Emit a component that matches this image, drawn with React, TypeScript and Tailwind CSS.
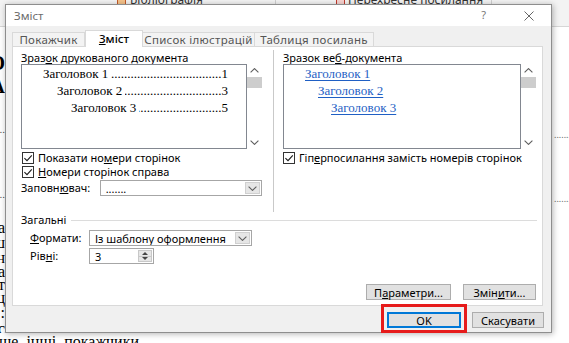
import React from "react";

function ChevronDown({ className = "" }: { className?: string }) {
  return (
    <svg viewBox="0 0 9 5" className={className} fill="none">
      <path d="M0.6 0.6 L4.5 4.4 L8.4 0.6" stroke="#5f5f5f" strokeWidth="1.1" />
    </svg>
  );
}

function ChevronUp({ className = "" }: { className?: string }) {
  return (
    <svg viewBox="0 0 9 5" className={className} fill="none">
      <path d="M0.6 4.4 L4.5 0.6 L8.4 4.4" stroke="#5f5f5f" strokeWidth="1.1" />
    </svg>
  );
}

function Check() {
  return (
    <span className="flex h-[12px] w-[12px] shrink-0 items-center justify-center border border-[#333333] bg-white">
      <svg viewBox="0 0 10 10" className="h-[10px] w-[10px]" fill="none">
        <path d="M1.4 5.1 L4 7.6 L8.8 2.4" stroke="#1a1a1a" strokeWidth="1.1" />
      </svg>
    </span>
  );
}

function Select({ width, value }: { width: string; value: string }) {
  return (
    <div className={`flex h-[16px] items-stretch border border-[#a6a6a6] bg-white ${width}`}>
      <span className="flex flex-1 items-center overflow-hidden pl-[5px] leading-none whitespace-nowrap">{value}</span>
      <span className="m-px flex w-[15px] items-center justify-center border border-[#d0d0d0] bg-[#e6e6e6]">
        <ChevronDown className="h-[5px] w-[9px]" />
      </span>
    </div>
  );
}

function ScrollBar() {
  return (
    <div className="flex w-[15px] flex-col">
      <div className="flex h-[13px] items-center justify-center">
        <ChevronUp className="h-[5px] w-[9px]" />
      </div>
      <div className="h-[11px] bg-[#cdcdcd]" />
      <div className="flex-1" />
      <div className="flex h-[13px] items-center justify-center">
        <ChevronDown className="h-[5px] w-[9px]" />
      </div>
    </div>
  );
}

function TocLine({ indent, text, num }: { indent: string; text: string; num: string }) {
  return (
    <div className={`flex h-[17px] items-center pr-[18px] ${indent}`}>
      <span className="whitespace-nowrap">{text}</span>
      <span className="ml-[3px] flex flex-1 justify-end overflow-hidden whitespace-nowrap">
        {".".repeat(90)}
      </span>
      <span>{num}</span>
    </div>
  );
}

function WebLine({ indent, text }: { indent: string; text: string }) {
  return (
    <div className={`flex h-[17px] items-center ${indent}`}>
      <span className="whitespace-nowrap text-[#1f5fc4] underline underline-offset-[2px]">{text}</span>
    </div>
  );
}

function Button({ width, children, primary = false }: { width: string; children: React.ReactNode; primary?: boolean }) {
  return (
    <div
      className={`flex h-[16px] items-center justify-center bg-[#e1e1e1] leading-none ${width} ${
        primary ? "border-2 border-[#0078d7]" : "border border-[#adadad]"
      }`}
    >
      {children}
    </div>
  );
}

function Background() {
  return (
    <div className="flex h-full w-full flex-col">
      {/* ribbon */}
      <div className="flex h-[27px] shrink-0 items-start overflow-hidden border-b border-[#d6d6d6] bg-[#f3f3f3] text-[12px] text-[#333]">
        <div className="ml-[117px] -mt-[9px] flex items-center gap-[4px]">
          <span className="h-[12px] w-[9px] border border-[#c55a2a] bg-[#f4c28a]" />
          <span>Бібліографія</span>
        </div>
        <div className="ml-[72px] h-[22px] w-px bg-[#cfcfcf]" />
        <div className="ml-[60px] -mt-[9px] flex items-center gap-[3px]">
          <span className="h-[12px] w-[9px] border border-[#c0392b] bg-[#f6d3cf]" />
          <span>Перехресне посилання</span>
        </div>
        <div className="ml-[8px] h-[22px] w-px bg-[#cfcfcf]" />
      </div>
      {/* body */}
      <div className="flex min-h-0 flex-1">
        <div className="flex w-[5px] shrink-0 flex-col overflow-hidden font-['Liberation_Serif',serif] text-black">
          <div className="mt-[26px] flex h-[20px] justify-end whitespace-nowrap text-[20px] font-bold leading-[20px]">О</div>
          <div className="mt-[3px] flex h-[20px] justify-end whitespace-nowrap text-[20px] font-bold leading-[20px]">А</div>
          <div className="mt-[27px] flex h-[12px] justify-end whitespace-nowrap text-[11px] leading-[12px] text-[#555]">.......</div>
          <div className="mt-[53px] flex h-[12px] justify-end whitespace-nowrap text-[11px] leading-[12px] text-[#555]">.......</div>
          <div className="mt-[20px] flex h-[15px] justify-end whitespace-nowrap text-[16px] leading-[15px]">а</div>
          <div className="flex h-[15px] justify-end whitespace-nowrap text-[16px] leading-[15px]">ш</div>
          <div className="flex h-[15px] justify-end whitespace-nowrap text-[16px] leading-[15px]">н</div>
          <div className="flex h-[14px] justify-end whitespace-nowrap text-[16px] leading-[14px]">а</div>
          <div className="flex h-[12px] justify-end whitespace-nowrap text-[16px] leading-[12px]">т</div>
          <div className="flex h-[14px] justify-end whitespace-nowrap text-[16px] leading-[14px]">ц</div>
          <div className="flex h-[16px] justify-end whitespace-nowrap text-[16px] leading-[16px]">:</div>
          <div className="flex h-[15px] justify-end whitespace-nowrap text-[16px] leading-[15px]">с</div>
        </div>
        <div className="flex-1" />
        <div className="flex w-[17px] shrink-0 flex-col overflow-hidden text-[9px] leading-[8px] text-[#666]">
          <div className="mt-[104px] h-[8px] whitespace-nowrap pl-[2px]">...........</div>
          <div className="mt-[56px] h-[8px] whitespace-nowrap pl-[2px]">...........</div>
        </div>
      </div>
      {/* bottom line of document */}
      <div className="h-[10px] shrink-0">
        <div className="-mt-[1px] flex h-[20px] items-center gap-[8px] whitespace-nowrap font-['Liberation_Serif',serif] text-[16px] leading-[20px] text-black">
          <span className="-ml-[1px]">ще</span>
          <span>інші</span>
          <span>покажчики</span>
        </div>
      </div>
    </div>
  );
}

function Dialog() {
  return (
    <div className="absolute left-[5px] top-[4px] flex h-[329px] w-[547px] flex-col border border-[#8e8e8e] bg-[#f0f0f0] text-[11px] shadow-[1px_1px_6px_rgba(0,0,0,0.3)]">
      {/* title bar */}
      <div className="flex h-[21px] shrink-0 items-center bg-white">
        <span className="ml-[8px] text-[11.5px] text-[#6b6b6b]">Зміст</span>
        <span className="ml-auto text-[11px] text-[#777]">?</span>
        <svg viewBox="0 0 10 10" className="ml-[38px] mr-[17px] h-[10px] w-[10px]" fill="none">
          <path d="M0.5 0.5 L9.5 9.5 M9.5 0.5 L0.5 9.5" stroke="#555" strokeWidth="0.9" />
        </svg>
      </div>

      {/* tabs */}
      <div className="ml-[6px] mt-[4px] flex h-[16px] items-start text-[11.5px]">
        <div className="mt-[2px] flex h-[14px] w-[73px] items-center justify-center border border-b-0 border-[#d9d9d9] bg-[#f3f3f3] tracking-[0.3px] text-[#555]">
          Покажчик
        </div>
        <div className="relative z-10 flex h-[17px] w-[58px] items-center justify-center border border-b-0 border-[#d9d9d9] bg-white font-medium text-black">
          <span>
            <span className="underline">З</span>міст
          </span>
        </div>
        <div className="mt-[2px] flex h-[14px] w-[112px] items-center justify-center border border-b-0 border-l-0 border-[#d9d9d9] bg-[#f3f3f3] tracking-[0.3px] text-[#555]">
          Список ілюстрацій
        </div>
        <div className="mt-[2px] flex h-[14px] w-[119px] items-center justify-center border border-b-0 border-l-0 border-[#d9d9d9] bg-[#f3f3f3] tracking-[0.3px] text-[#555]">
          Таблиця посилань
        </div>
      </div>

      {/* panel */}
      <div className="ml-[6px] flex h-[260px] w-[531px] flex-col border border-[#d9d9d9] bg-white">
        <div className="flex h-[165px]">
          {/* left column */}
          <div className="ml-[8px] flex w-[241px] flex-col pt-[4px]">
            <div className="h-[13px] leading-[13px] whitespace-nowrap">
              Зраз<span className="underline">о</span>к друкованого документа
            </div>
            <div className="flex h-[85px]">
              <div className="w-[226px] border border-[#828790] font-['Liberation_Serif',serif] text-[13px]">
                <TocLine indent="pl-[21px]" text="Заголовок 1" num="1" />
                <TocLine indent="pl-[35px]" text="Заголовок 2" num="3" />
                <TocLine indent="pl-[49px]" text="Заголовок 3" num="5" />
              </div>
              <ScrollBar />
            </div>
            <div className="mt-[2px] flex h-[14px] items-center gap-[4px] pl-[1px] whitespace-nowrap">
              <Check />
              <span>
                Показати но<span className="underline">м</span>ери сторінок
              </span>
            </div>
            <div className="flex h-[14px] items-center gap-[4px] pl-[1px] whitespace-nowrap">
              <Check />
              <span>
                <span className="underline">Н</span>омери сторінок справа
              </span>
            </div>
            <div className="mt-[1px] flex h-[16px] items-center">
              <span className="w-[79px] whitespace-nowrap">
                Заповн<span className="underline">ю</span>вач:
              </span>
              <Select width="w-[163px]" value="......." />
            </div>
          </div>

          {/* divider */}
          <div className="ml-[11px] mt-[3px] w-px bg-[#c9c9c9]" />

          {/* right column */}
          <div className="ml-[9px] flex w-[254px] flex-col pt-[4px]">
            <div className="h-[13px] leading-[13px] whitespace-nowrap">
              Зразок ве<span className="underline">б</span>-документа
            </div>
            <div className="flex h-[85px]">
              <div className="w-[238px] border border-[#828790] font-['Liberation_Serif',serif] text-[13px]">
                <WebLine indent="pl-[21px]" text="Заголовок 1" />
                <WebLine indent="pl-[34px]" text="Заголовок 2" />
                <WebLine indent="pl-[47px]" text="Заголовок 3" />
              </div>
              <ScrollBar />
            </div>
            <div className="mt-[2px] flex h-[14px] items-center gap-[4px] whitespace-nowrap">
              <Check />
              <span>
                Гіп<span className="underline">е</span>рпосилання замість номерів сторінок
              </span>
            </div>
          </div>
        </div>

        {/* group: Загальні */}
        <div className="mt-[1px] flex h-[14px] items-center">
          <span className="pl-[8px] whitespace-nowrap">Загальні</span>
          <div className="ml-[5px] mr-[5px] h-px flex-1 bg-[#dcdcdc]" />
        </div>
        <div className="mt-[3px] flex h-[16px] items-center pl-[17px]">
          <span className="w-[59px] whitespace-nowrap">
            <span className="underline">Ф</span>ормати:
          </span>
          <Select width="w-[163px]" value="Із шаблону оформлення" />
        </div>
        <div className="mt-[2px] flex h-[16px] items-center pl-[17px]">
          <span className="w-[59px] whitespace-nowrap">
            Рів<span className="underline">н</span>і:
          </span>
          <div className="flex h-[16px] w-[65px] items-stretch border border-[#a6a6a6] bg-white">
            <span className="flex flex-1 items-center pl-[5px] leading-none">3</span>
            <span className="m-px flex w-[14px] flex-col border border-[#c8c8c8] bg-[#e6e6e6]">
              <span className="flex flex-1 items-center justify-center border-b border-[#c8c8c8]">
                <svg viewBox="0 0 6 3" className="h-[3px] w-[6px]">
                  <path d="M0 3 L3 0 L6 3 Z" fill="#444" />
                </svg>
              </span>
              <span className="flex flex-1 items-center justify-center">
                <svg viewBox="0 0 6 3" className="h-[3px] w-[6px]">
                  <path d="M0 0 L3 3 L6 0 Z" fill="#444" />
                </svg>
              </span>
            </span>
          </div>
        </div>
        <div className="mt-[20px] flex h-[16px] justify-end gap-[12px] pr-[6px]">
          <Button width="w-[85px]">
            <span>
              П<span className="underline">а</span>раметри...
            </span>
          </Button>
          <Button width="w-[73px]">
            <span>
              Змін<span className="underline">и</span>ти...
            </span>
          </Button>
        </div>
      </div>

      {/* bottom buttons */}
      <div className="mt-[6px] flex">
        <div className="relative ml-[381px]">
          <Button width="w-[74px]" primary>
            OK
          </Button>
          <div className="pointer-events-none absolute -left-[6px] -top-[8px] h-[29px] w-[86px] border-[3px] border-[#e61b1b]" />
        </div>
        <div className="ml-[11px]">
          <Button width="w-[72px]">Скасувати</Button>
        </div>
      </div>
    </div>
  );
}

export default function App() {
  return (
    <div className="relative h-[343px] w-[569px] overflow-hidden bg-white font-['Noto_Sans',sans-serif] text-[11px] text-black">
      <Background />
      <Dialog />
    </div>
  );
}
